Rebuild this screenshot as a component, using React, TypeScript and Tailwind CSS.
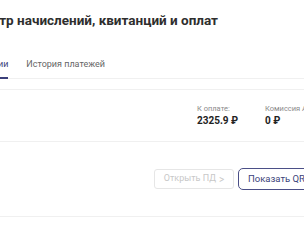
const FONT = "font-['Roboto','Noto_Sans',sans-serif]"

function Amount({ label, value }: { label: string; value: string }) {
  return (
    <div className="w-[68px] shrink-0">
      <div className="text-[7.5px] leading-[11px] text-[#8a8a8a] whitespace-nowrap">{label}</div>
      <div className="text-[10px] leading-[14px] font-bold text-[#222] whitespace-nowrap">{value}</div>
    </div>
  )
}

export default function App() {
  return (
    <div className={`w-[304px] h-[228px] overflow-hidden bg-white ${FONT}`}>
      <div className="w-[600px]">
        <h1 className="-ml-[31px] pt-[11px] text-[13.5px] leading-[18px] font-bold text-[#2e2e2e] whitespace-nowrap">
          Реестр начислений, квитанций и оплат
        </h1>

        {/* tabs */}
        <div className="mt-[29px] flex border-b border-[#f0f0f0] text-[9px] leading-[13px]">
          <div className="-ml-[98px] pb-[6px] border-b-2 border-[#3b3f7a] text-[#3b3f7a] -mb-px whitespace-nowrap">
            Начисления и квитанции
          </div>
          <div className="ml-[18px] pb-[6px] text-[#666] whitespace-nowrap">История платежей</div>
        </div>

        <div className="mt-[10px] -ml-[30px] border-t border-[#f0f0f0]">
          <div className="h-[52px] flex items-center border-b border-[#f0f0f0]">
            <div className="w-[227px] shrink-0" />
            <Amount label="К оплате:" value="2325.9 ₽" />
            <Amount label="Комиссия АЗ:" value="0 ₽" />
          </div>

          <div className="h-[75px] flex items-center gap-[4px] border-b border-[#f0f0f0]">
            <div className="w-[180px] shrink-0" />
            <button
              disabled
              className="h-[20px] w-[80px] rounded-[3px] border border-[#e6e6e6] text-[9px] text-[#c8c8c8] flex items-center justify-center gap-[3px]"
            >
              Открыть ПД <span className="text-[10px]">&gt;</span>
            </button>
            <button className="h-[22px] px-[9px] rounded-[5px] border border-[#4b4f87] text-[9.5px] text-[#3b3f7a] whitespace-nowrap">
              Показать QR-код
            </button>
          </div>
        </div>
      </div>
    </div>
  )
}
